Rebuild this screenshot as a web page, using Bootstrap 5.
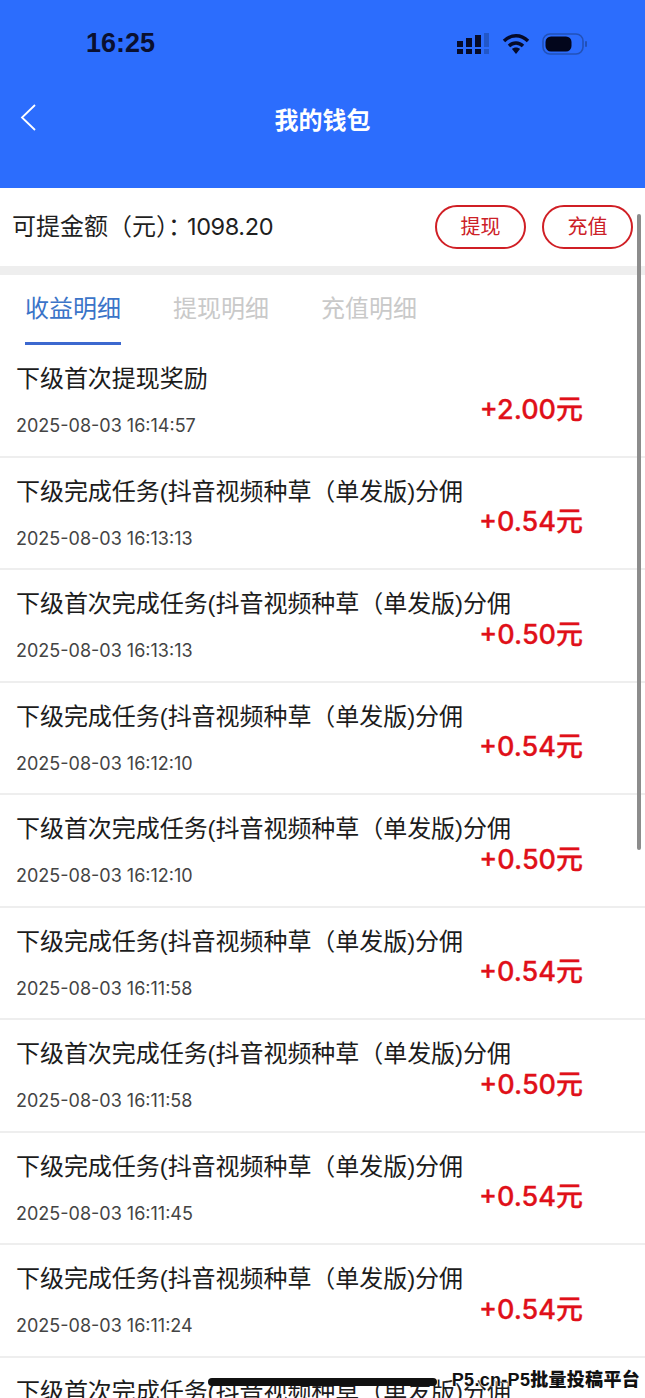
<!DOCTYPE html>
<html lang="zh-CN">
<head>
  <meta charset="UTF-8">
  <meta name="viewport" content="width=device-width, initial-scale=1">
  <title>我的钱包</title>
  <link href="https://cdn.jsdelivr.net/npm/bootstrap@5.3.3/dist/css/bootstrap.min.css" rel="stylesheet">
  <style>
    html, body { height: 1398px; overflow: hidden; }
    body { font-family: "Inter", "Noto Sans CJK SC", sans-serif; color: #1c1c1c; background: #fff; position: relative; }
    .wallet-head { background: #2c6dfd; height: 188px; }
    .status-row { height: 87px; padding: 0 57px 0 86px; }
    .status-time { font-size: 27px; font-weight: 700; color: #0a1030; font-family: "Liberation Sans", sans-serif; }
    .status-icons { gap: 12px; }
    .head-row { height: 66px; padding: 0 20px 0 20px; }
    .head-title { font-size: 24px; font-weight: 700; color: #fff; flex: 1; text-align: center; padding-right: 16px; margin-top: 2px; }
    .back-icon { margin-top: -5px; }
    .balance-row { height: 78px; padding: 0 12px 0 12px; }
    .balance-text { font-size: 24px; color: #1f1f1f; }
    .balance-num { font-size: 23.5px; letter-spacing: -0.4px; margin-left: -5px; }
    .pill-btn { width: 91px; height: 44px; border: 2px solid #d01f25; border-radius: 22px; color: #cc2027; background: #fff; font-size: 20px; padding: 0; line-height: 1; }
    .gap-band { height: 9px; background: #eeeeee; }
    .tab-row { height: 70px; padding-left: 25px; gap: 52px; }
    .tab-item { font-size: 24px; color: #c9c9c9; height: 70px; line-height: 67px; width: 96px; white-space: nowrap; }
    .tab-item.on { color: #3b74c8; border-bottom: 3px solid #3c68cf; }
    .log-row { height: 112.5px; border-bottom: 2px solid #eeeeee; padding: 15px 62px 0 17px; display: grid; grid-template-columns: minmax(0, 1fr) auto; grid-template-rows: 37px auto; }
    .log-title { font-family: "Liberation Sans", "Noto Sans CJK SC", sans-serif; font-size: 24px; line-height: 37px; white-space: nowrap; color: #1c1c1c; margin-left: -1px; letter-spacing: -0.05px; }
    .log-date { font-size: 18px; color: #444; line-height: 24px; margin-top: 17px; margin-left: -1px; }
    .log-money { grid-column: 2; grid-row: 1 / 3; font-size: 27px; font-weight: 500; color: #e01019; align-self: center; margin-top: 3px; line-height: 1; -webkit-text-stroke: 0.3px #e01019; }
    .scroll-thumb { position: absolute; left: 637px; top: 214px; width: 4px; height: 636px; background: #8c8c8c; border-radius: 2px; }
    .home-bar { position: absolute; left: 208px; top: 1378px; width: 229px; height: 8px; background: #111; border-radius: 4px; }
    .watermark { position: absolute; right: 5px; top: 1367px; font-family: "Liberation Sans", "Noto Sans CJK SC", sans-serif; font-size: 18px; font-weight: 900; letter-spacing: 0.3px; color: #111; line-height: 27px; text-shadow: 0 0 2px #fff, 0 0 2px #fff, 0 0 2px #fff; white-space: nowrap; }
  </style>
</head>
<body>
  <div class="wallet-head">
    <div class="status-row d-flex align-items-center justify-content-between">
      <span class="status-time">16:25</span>
      <div class="d-flex align-items-center status-icons">
        <svg width="34" height="22" viewBox="0 0 34 22">
          <g fill="#070b28">
            <rect x="1" y="8" width="6" height="6"/><rect x="1" y="16" width="6" height="5"/>
            <rect x="10" y="5" width="6" height="9"/><rect x="10" y="16" width="6" height="5"/>
            <rect x="19" y="2" width="6" height="12"/><rect x="19" y="16" width="6" height="5"/>
          </g>
          <g fill="#2257c8">
            <rect x="28" y="0" width="5" height="14"/><rect x="28" y="16" width="5" height="5"/>
          </g>
        </svg>
        <svg width="28" height="22" viewBox="0 0 28 22" fill="none" stroke="#050a28" stroke-width="3.4">
          <path d="M2 8 C9 1 19 1 26 8"/>
          <path d="M7 13 C11 9 17 9 21 13"/>
          <path d="M10 16 L14 21 L18 16 C16 14 12 14 10 16Z" fill="#050a28" stroke="none"/>
        </svg>
        <svg width="46" height="22" viewBox="0 0 46 22">
          <rect x="1" y="1" width="40" height="20" rx="7" fill="none" stroke="#2251b8" stroke-width="1.6"/>
          <rect x="3.500" y="3.500" width="26" height="15" rx="5.500" fill="#03061c"/>
          <rect x="43" y="8" width="2" height="6" rx="1" fill="#2251b8"/>
        </svg>
      </div>
    </div>
    <div class="head-row d-flex align-items-center">
      <svg class="back-icon" width="16" height="27" viewBox="0 0 16 27" fill="none" stroke="#fff" stroke-width="1.8"><path d="M15 1 L2 13.500 L15 26"/></svg>
      <div class="head-title">我的钱包</div>
    </div>
  </div>

  <div class="balance-row d-flex align-items-center justify-content-between">
    <span class="balance-text">可提金额（元）：<span class="balance-num">1098.20</span></span>
    <div class="d-flex gap-3">
      <button type="button" class="btn pill-btn">提现</button>
      <button type="button" class="btn pill-btn">充值</button>
    </div>
  </div>
  <div class="gap-band"></div>

  <div class="tab-row d-flex">
    <div class="tab-item on">收益明细</div>
    <div class="tab-item">提现明细</div>
    <div class="tab-item">充值明细</div>
  </div>

  <div id="logList"></div>

  <div class="scroll-thumb"></div>
  <div class="home-bar"></div>
  <div class="watermark">P5.cn-P5批量投稿平台</div>

  <script>
    const A = '下级完成任务(抖音视频种草（单发版)分佣';
    const B = '下级首次完成任务(抖音视频种草（单发版)分佣';
    const logs = [
      ['下级首次提现奖励', '2025-08-03 16:14:57', '+2.00元'],
      [A, '2025-08-03 16:13:13', '+0.54元'],
      [B, '2025-08-03 16:13:13', '+0.50元'],
      [A, '2025-08-03 16:12:10', '+0.54元'],
      [B, '2025-08-03 16:12:10', '+0.50元'],
      [A, '2025-08-03 16:11:58', '+0.54元'],
      [B, '2025-08-03 16:11:58', '+0.50元'],
      [A, '2025-08-03 16:11:45', '+0.54元'],
      [A, '2025-08-03 16:11:24', '+0.54元'],
      [B, '2025-08-03 16:11:24', '+0.50元']
    ];
    document.getElementById('logList').innerHTML = logs.map(l => `
      <div class="log-row">
        <div class="log-title">${l[0]}</div>
        <div class="log-date">${l[1]}</div>
        <div class="log-money">${l[2]}</div>
      </div>`).join('');
  </script>
  <script src="https://cdn.jsdelivr.net/npm/bootstrap@5.3.3/dist/js/bootstrap.bundle.min.js"></script>
</body>
</html>
